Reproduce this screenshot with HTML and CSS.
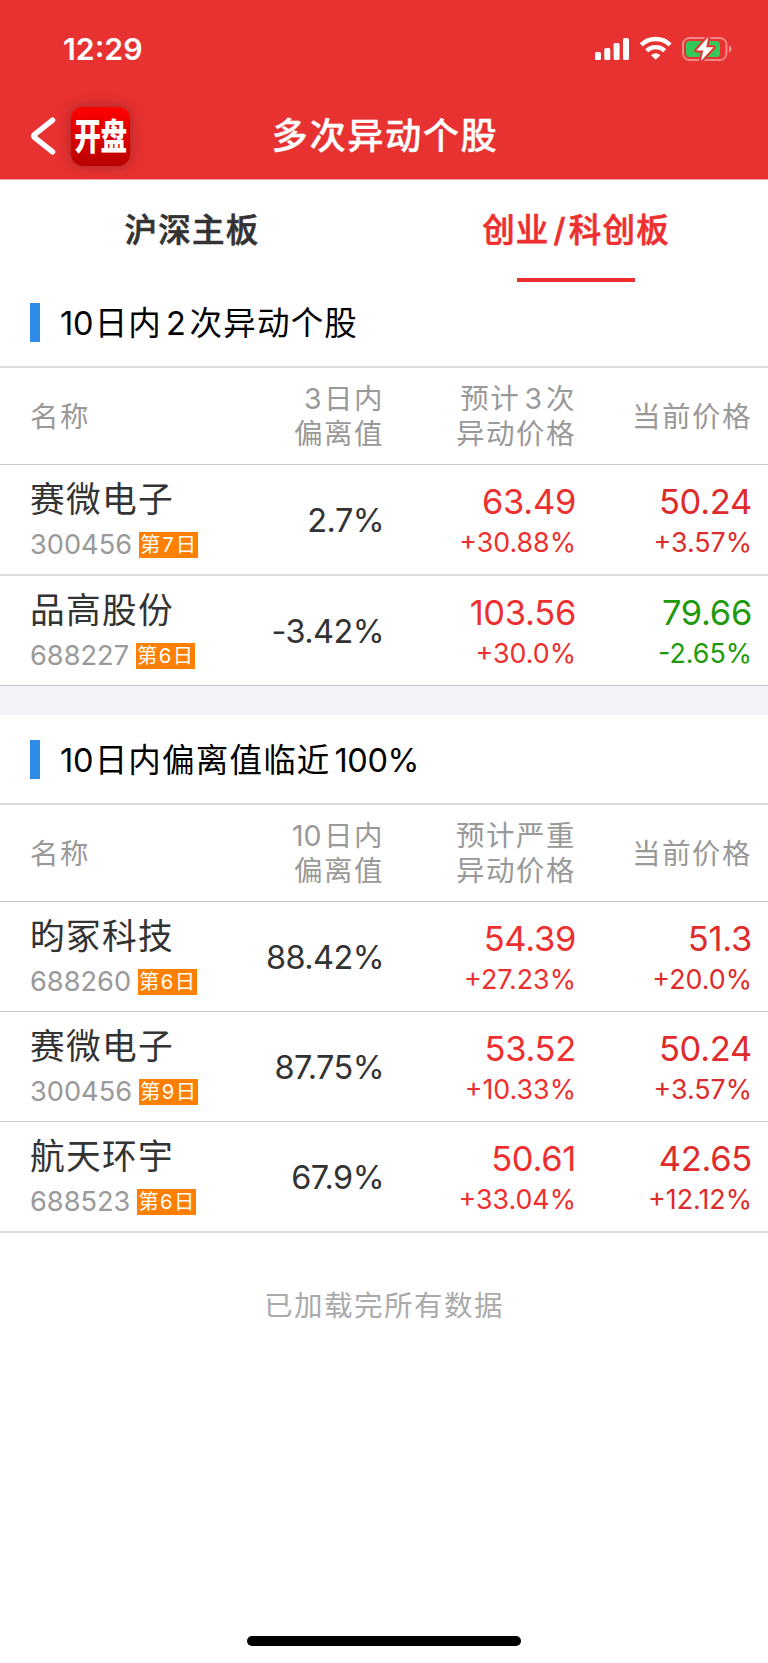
FILE: index.html
```html
<!DOCTYPE html>
<html lang="zh-CN">
<head>
<meta charset="utf-8">
<title>多次异动个股</title>
<link rel="stylesheet" href="styles.css">
</head>
<body>
<header class="top">
  <div class="status">
    <span class="clock">12:29</span>
    <svg class="status-icons" width="140" height="28" viewBox="0 0 140 28">
      <g fill="#fff">
        <rect x="0" y="16" width="6" height="8" rx="1.6"/>
        <rect x="9.3" y="12" width="6" height="12" rx="1.6"/>
        <rect x="18.6" y="7" width="6" height="17" rx="1.6"/>
        <rect x="28" y="2" width="6" height="22" rx="1.6"/>
      </g>
      <g fill="none" stroke="#fff" stroke-width="4.4">
        <path d="M46.3 8.9A20.6 20.6 0 0 1 75.1 8.9"/>
        <path d="M51.7 14.8A12.8 12.8 0 0 1 69.7 14.8"/>
      </g>
      <path d="M60.7 23.8L56 19.2Q60.7 15.2 65.4 19.2Z" fill="#fff"/>
      <rect x="88" y="2" width="43.4" height="22" rx="6.5" fill="none" stroke="#fff" stroke-opacity=".42" stroke-width="2"/>
      <path d="M134 9.2q2.6 1 2.6 3.8t-2.6 3.8z" fill="#fff" fill-opacity=".5"/>
      <rect x="91" y="5" width="34" height="16" rx="3.6" fill="#34c759"/>
      <path d="M113.4 .8L101.3 14.6H108.2L105.8 25.2L118.6 11.3H111.3Z" fill="#fff" stroke="#e83131" stroke-width="4" stroke-linejoin="round" paint-order="stroke"/>
    </svg>
  </div>
  <div class="nav">
    <div class="nav-left">
      <svg class="back" width="26" height="38" viewBox="0 0 26 38"><path d="M22.6 3.2L4.4 17.6Q2.8 19 4.4 20.4L22.6 34.8" fill="none" stroke="#fff" stroke-width="5.4" stroke-linecap="round" stroke-linejoin="round"/></svg>
      <span class="app"><b>开盘</b></span>
    </div>
    <h1>多次异动个股</h1>
  </div>
</header>

<nav class="tabs">
  <span class="tab">沪深主板</span>
  <span class="tab on">创业<i>/</i>科创板</span>
</nav>

<section>
  <h2><span class="n">10</span><span class="a">日内</span><span class="b">2</span>次异动个股</h2>
  <div class="head">
    <span>名称</span>
    <span><em>3</em>日内<br>偏离值</span>
    <span>预计<em class="b">3</em>次<br>异动价格</span>
    <span>当前价格</span>
  </div>
  <div class="row soft">
    <div class="stock"><p>赛微电子</p><p class="code">300456<span class="tag">第<b>7</b>日</span></p></div>
    <div class="dev">2.7%</div>
    <div class="price up"><p>63.49</p><p>+30.88%</p></div>
    <div class="price up now"><p>50.24</p><p>+3.57%</p></div>
  </div>
  <div class="row">
    <div class="stock"><p>品高股份</p><p class="code">688227<span class="tag">第<b>6</b>日</span></p></div>
    <div class="dev">-3.42%</div>
    <div class="price up"><p>103.56</p><p>+30.0%</p></div>
    <div class="price down"><p>79.66</p><p>-2.65%</p></div>
  </div>
</section>

<div class="gap"></div>

<section>
  <h2><span class="n">10</span><span class="a">日内偏离值临近</span><span class="c">100%</span></h2>
  <div class="head">
    <span>名称</span>
    <span><em>10</em>日内<br>偏离值</span>
    <span>预计严重<br>异动价格</span>
    <span>当前价格</span>
  </div>
  <div class="row">
    <div class="stock"><p>昀冢科技</p><p class="code">688260<span class="tag">第<b>6</b>日</span></p></div>
    <div class="dev">88.42%</div>
    <div class="price up"><p>54.39</p><p>+27.23%</p></div>
    <div class="price up now"><p>51.3</p><p>+20.0%</p></div>
  </div>
  <div class="row">
    <div class="stock"><p>赛微电子</p><p class="code">300456<span class="tag">第<b>9</b>日</span></p></div>
    <div class="dev">87.75%</div>
    <div class="price up"><p>53.52</p><p>+10.33%</p></div>
    <div class="price up now"><p>50.24</p><p>+3.57%</p></div>
  </div>
  <div class="row soft">
    <div class="stock"><p>航天环宇</p><p class="code">688523<span class="tag">第<b>6</b>日</span></p></div>
    <div class="dev">67.9%</div>
    <div class="price up"><p>50.61</p><p>+33.04%</p></div>
    <div class="price up now"><p>42.65</p><p>+12.12%</p></div>
  </div>
</section>

<p class="end">已加载完所有数据</p>
<div class="home"></div>
</body>
</html>
```
FILE: styles.css
```css
* { box-sizing: border-box; margin: 0; padding: 0; }

body {
  width: 768px;
  height: 1663px;
  display: flex;
  flex-direction: column;
  background: #fff;
  color: #333;
  font-family: Inter, "Noto Sans CJK SC", sans-serif;
  overflow: hidden;
}

em, i { font-style: normal; }

.top {
  height: 180px;
  background: #e83131;
  border-bottom: 1px solid #f4a3a3;
  color: #fff;
}

.status {
  height: 93px;
  padding: 36px 33px 0 63px;
  display: flex;
  justify-content: space-between;
}
.clock { font-size: 30.3px; line-height: 27px; font-weight: 600; }

.nav {
  height: 86px;
  display: grid;
  grid-template-columns: 1fr auto 1fr;
  align-items: center;
}
.nav-left { display: flex; align-items: center; gap: 15px; padding-left: 30px; }
.back { display: block; }
.app {
  width: 59px;
  height: 59px;
  border-radius: 12px;
  background: linear-gradient(#ff0000, #b80000);
  box-shadow: 0 0 12px rgba(90, 30, 30, .5);
  display: flex;
  align-items: center;
  justify-content: center;
}
.app b { padding-top: 2px; font-size: 36px; line-height: 59px; font-weight: 900; transform: scaleX(.74); white-space: nowrap; letter-spacing: -.5px; }
h1 { padding-left: 2px; font-size: 36.3px; line-height: 50px; font-weight: 500; letter-spacing: 1.5px; -webkit-text-stroke: .3px; }

.tabs { height: 98px; display: grid; grid-template-columns: 1fr 1fr; }
.tab {
  position: relative;
  height: 98px;
  text-align: center;
  font-size: 32.5px;
  line-height: 101px;
  font-weight: 500;
  letter-spacing: 1.2px;
  -webkit-text-stroke: .6px;
}
.tab i { margin: 0 2px 0 4px; }
.tab.on { color: #ed2f2f; }
.tab.on::after {
  content: "";
  position: absolute;
  left: 133px;
  bottom: -4px;
  width: 118px;
  height: 4px;
  background: #ed2f2f;
}

h2 {
  height: 90px;
  border-bottom: 2px solid #dbdbdb;
  padding-left: 30px;
  display: flex;
  align-items: center;
  color: #000;
  font-size: 32.5px;
  line-height: 88px;
  font-weight: 400;
  letter-spacing: 1.2px;
  padding-top: 3px;
}
h2::before { content: ""; width: 10px; height: 39px; margin: -3px 20px 0 0; background: #2e8be8; }
h2 .n { letter-spacing: -.3px; }
h2 .a { margin-left: 1.5px; }
h2 .b { margin: 0 2.5px 0 4px; }
h2 .c { margin-left: 4px; letter-spacing: -.4px; }

.head, .row {
  display: grid;
  grid-template-columns: 192px 192px 192px 176px;
  padding-right: 16px;
  text-align: right;
}
.head {
  height: 97px;
  border-bottom: 1px solid #c8c8c8;
  align-items: center;
  color: #999;
  font-size: 28.5px;
  line-height: 35px;
  letter-spacing: 1.5px;
}
.head span:first-child { text-align: left; padding-left: 30px; }
.head em { margin-right: 2.5px; letter-spacing: 0; }
.head .b { margin: 0 4px 0 4px; }

.row { height: 110px; border-bottom: 1px solid #c8c8c8; }
.row.soft { height: 111px; border-bottom: 2px solid #dbdbdb; }
.stock { padding: 11px 0 0 30px; text-align: left; font-size: 34.7px; line-height: 47px; letter-spacing: 1.3px; white-space: nowrap; }
.stock .code {
  display: flex;
  align-items: center;
  gap: 7px;
  height: 43px;
  color: #999;
  font-size: 27.2px;
  line-height: 43px;
  letter-spacing: 0;
}
.tag {
  flex: none;
  width: 59px;
  height: 26px;
  background: #ff8000;
  color: #fff;
  display: flex;
  justify-content: space-between;
  padding: 0 2px 0 1px;
  font-size: 20.3px;
  line-height: 26px;
}
.tag b { font-weight: 400; }
.dev { padding-right: 0; line-height: 112px; font-size: 32.5px; letter-spacing: -.6px; }
.price { padding-top: 13px; font-size: 34.5px; line-height: 47px; letter-spacing: -.3px; }
.price p + p { font-size: 26.8px; line-height: 35px; letter-spacing: 0; }
.up { color: #ed2f2f; }
.up.now { color: #de2b2b; }
.down { color: #1f9a0c; }

.gap { height: 29px; background: #f4f3fa; }

.end { margin-top: 53px; text-align: center; color: #aaa; font-size: 28.5px; line-height: 40px; letter-spacing: 1.5px; }
.home { width: 274px; height: 10px; margin: auto auto 17px; border-radius: 5px; background: #000; }
```
